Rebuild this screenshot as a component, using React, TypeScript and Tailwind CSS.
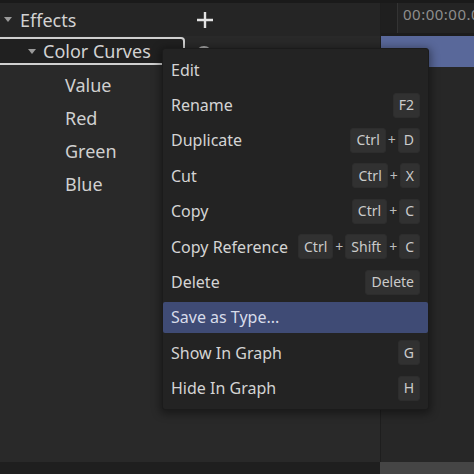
import React from "react";

type Item = { label: string; keys?: string[]; active?: boolean };

const items: Item[] = [
  { label: "Edit" },
  { label: "Rename", keys: ["F2"] },
  { label: "Duplicate", keys: ["Ctrl", "D"] },
  { label: "Cut", keys: ["Ctrl", "X"] },
  { label: "Copy", keys: ["Ctrl", "C"] },
  { label: "Copy Reference", keys: ["Ctrl", "Shift", "C"] },
  { label: "Delete", keys: ["Delete"] },
  { label: "Save as Type...", active: true },
  { label: "Show In Graph", keys: ["G"] },
  { label: "Hide In Graph", keys: ["H"] },
];

function Arrow() {
  return (
    <svg width="8" height="5" viewBox="0 0 8 5" className="shrink-0">
      <path d="M0 0 L8 0 L4 5 Z" fill="#9a9a9a" />
    </svg>
  );
}

function Key({ k }: { k: string }) {
  return (
    <span className="h-[25px] px-[5px] rounded-[3px] bg-[#313131] border border-[#2d2d2d] text-[14px] text-[#cbcbcb] flex items-center justify-center leading-none">
      {k}
    </span>
  );
}

export default function App() {
  return (
    <div className="relative w-[474px] h-[474px] overflow-hidden bg-[#282828] flex flex-col font-['Noto_Sans',sans-serif]">
      <div className="h-[3px] bg-[#1a1a1a]" />
      <div className="flex-1 flex min-h-0">
        {/* left tree panel */}
        <div className="w-[380px] shrink-0 flex flex-col bg-[#292929]">
          <div className="h-[33px] bg-[#252525] flex items-center pl-[4px]">
            <Arrow />
            <span className="ml-[8px] w-[176px] text-[18px] text-[#d2d2d2] leading-none">Effects</span>
            <svg width="18" height="18" viewBox="0 0 18 18">
              <path d="M9 1 V17 M1 9 H17" stroke="#e2e2e2" strokeWidth="2.4" />
            </svg>
          </div>
          <div className="h-[29px] flex">
            <div className="mt-[1px] h-[28px] w-[185px] bg-[#202020] border-t-2 border-r-2 border-b-2 border-[#d0d0d0] rounded-tr-[4px] rounded-br-[2px] flex items-center pl-[28px]">
              <Arrow />
              <span className="ml-[7px] text-[18px] text-[#d2d2d2] leading-none">Color Curves</span>
            </div>
            <svg width="18" height="18" viewBox="0 0 18 18" className="ml-[10px] mt-[8px]">
              <circle cx="9" cy="10" r="7" fill="none" stroke="#a8a8a8" strokeWidth="2" />
            </svg>
          </div>
          <div className="pt-[3px] flex flex-col">
            {["Value", "Red", "Green", "Blue"].map((t) => (
              <div key={t} className="h-[33px] flex items-center pl-[65px] text-[18px] text-[#d0d0d0] leading-none">
                {t}
              </div>
            ))}
          </div>
        </div>
        {/* right timeline panel */}
        <div className="flex-1 min-w-0 flex flex-col border-l border-[#1e1e1e]">
          <div className="h-[30px] flex">
            <div className="w-[17px] shrink-0 bg-[#1f1f1f] border-r border-[#333]" />
            <div className="flex-1 min-w-0 bg-[#242424] overflow-hidden whitespace-nowrap pl-[5px] pt-[4px] text-[15px] tracking-[0.5px] text-[#8e8e8e] leading-none">
              00:00:00.00
            </div>
          </div>
          <div className="h-[3px] bg-[#1c1c1c]" />
          <div className="h-[31px] bg-[#59689a]" />
          <div className="flex-1 bg-[#272727]" />
        </div>
      </div>
      <div className="h-[12px] flex">
        <div className="w-[380px] shrink-0 bg-[#1f1f1f]" />
        <div className="flex-1 bg-[#454545]" />
      </div>

      {/* context menu */}
      <div className="absolute left-[162px] top-[48px] w-[267px] bg-[#232323] border border-[#1b1b1b] rounded-[3px] py-[3px] shadow-[0_2px_8px_2px_rgba(0,0,0,0.4)] flex flex-col">
        {items.map((it) => (
          <div key={it.label} className="h-[35.4px] py-[2px]">
            <div
              className={
                "h-full flex items-center pl-[8px] pr-[8px] rounded-[2px] text-[16px] leading-none " +
                (it.active ? "bg-[#3f4b75] text-[#d8dcea]" : "text-[#d4d4d4]")
              }
            >
              <span className="flex-1">{it.label}</span>
              {it.keys && (
                <span className="flex items-center">
                  {it.keys.map((k, i) => (
                    <React.Fragment key={k + i}>
                      {i > 0 && <span className="mx-[2px] text-[14px] text-[#bcbcbc]">+</span>}
                      <Key k={k} />
                    </React.Fragment>
                  ))}
                </span>
              )}
            </div>
          </div>
        ))}
      </div>
    </div>
  );
}
